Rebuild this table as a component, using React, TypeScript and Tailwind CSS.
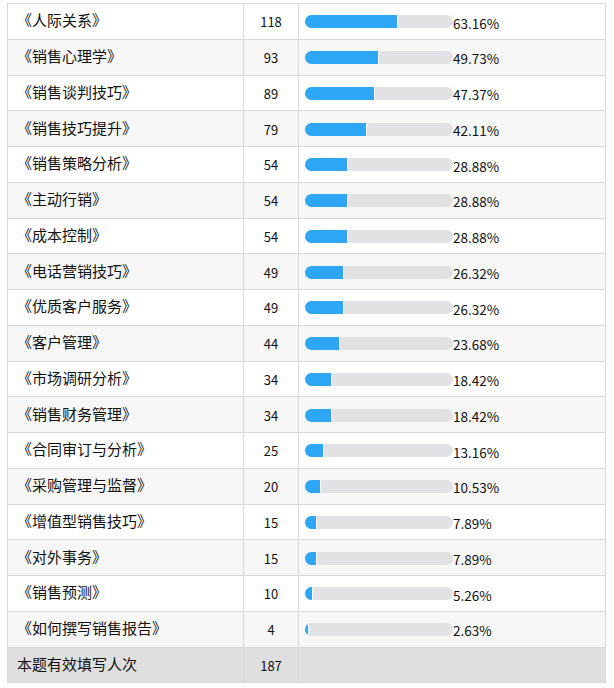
const rows: [string, number, string][] = [
  ['《人际关系》', 118, '63.16'],
  ['《销售心理学》', 93, '49.73'],
  ['《销售谈判技巧》', 89, '47.37'],
  ['《销售技巧提升》', 79, '42.11'],
  ['《销售策略分析》', 54, '28.88'],
  ['《主动行销》', 54, '28.88'],
  ['《成本控制》', 54, '28.88'],
  ['《电话营销技巧》', 49, '26.32'],
  ['《优质客户服务》', 49, '26.32'],
  ['《客户管理》', 44, '23.68'],
  ['《市场调研分析》', 34, '18.42'],
  ['《销售财务管理》', 34, '18.42'],
  ['《合同审订与分析》', 25, '13.16'],
  ['《采购管理与监督》', 20, '10.53'],
  ['《增值型销售技巧》', 15, '7.89'],
  ['《对外事务》', 15, '7.89'],
  ['《销售预测》', 10, '5.26'],
  ['《如何撰写销售报告》', 4, '2.63'],
]

export default function App() {
  return (
    <div
      className="w-[614px] h-[688px] bg-white pt-[3px] pl-[7px]"
      style={{ fontFamily: '"Noto Sans CJK SC", "Noto Sans", sans-serif' }}
    >
      <table className="w-[598px] table-fixed border-collapse text-[#111]">
        <colgroup>
          <col className="w-[236px]" />
          <col className="w-[55px]" />
          <col className="w-[307px]" />
        </colgroup>
        <tbody>
          {rows.map(([name, count, pct], i) => (
            <tr
              key={name}
              className={`h-[35.75px] ${i % 2 === 1 ? 'bg-[#f7f7f7]' : 'bg-white'}`}
            >
              <td className="border border-[#d9d9d9] pl-[9px] text-[15px] leading-none pb-[3px]">
                {name}
              </td>
              <td className="border border-[#d9d9d9] text-center text-[13px] leading-none pt-[1px]">
                {count}
              </td>
              <td className="border border-[#d9d9d9] pl-[6px] pt-[1px]">
                <div className="flex items-center">
                  <div className="w-[148px] h-[13px] rounded-full bg-[#e2e2e4] overflow-hidden">
                    <div
                      className="h-full bg-[#2ea6f6] border-r border-white"
                      style={{ width: `${parseFloat(pct)}%` }}
                    />
                  </div>
                  <span className="text-[13.5px] leading-none pt-[3px]">{pct}%</span>
                </div>
              </td>
            </tr>
          ))}
          <tr className="h-[35.75px] bg-[#dfdfdf]">
            <td className="border border-[#d9d9d9] pl-[9px] text-[15px] leading-none pb-[3px]">
              本题有效填写人次
            </td>
            <td className="border border-[#d9d9d9] text-center text-[13px] leading-none pt-[1px]">
              187
            </td>
            <td className="border border-[#d9d9d9]" />
          </tr>
        </tbody>
      </table>
    </div>
  )
}
